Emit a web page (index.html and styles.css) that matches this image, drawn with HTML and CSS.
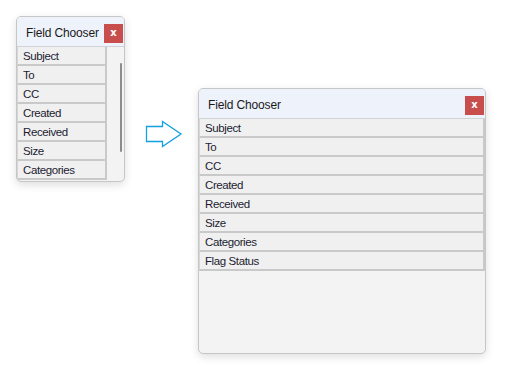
FILE: index.html
```html
<!DOCTYPE html>
<html>
<head>
<meta charset="utf-8">
<link rel="stylesheet" href="styles.css">
</head>
<body>
<div class="canvas">
  <div class="win win-small">
    <div class="titlebar">
      <span class="title">Field Chooser</span>
      <span class="close">x</span>
    </div>
    <div class="body">
      <div class="list">
        <div class="row">Subject</div>
        <div class="row">To</div>
        <div class="row">CC</div>
        <div class="row">Created</div>
        <div class="row">Received</div>
        <div class="row">Size</div>
        <div class="row">Categories</div>
      </div>
      <div class="scroll"><div class="thumb"></div></div>
    </div>
  </div>

  <svg class="arrow" width="38" height="28" viewBox="0 0 38 28">
    <path d="M1.5 6.5 H17.5 V1.5 L36 14 L17.5 26.5 V21.5 H1.5 Z" fill="#fff" stroke="#14a0e0" stroke-width="1.3" stroke-linejoin="miter"/>
  </svg>

  <div class="win win-big">
    <div class="titlebar">
      <span class="title">Field Chooser</span>
      <span class="close">x</span>
    </div>
    <div class="body">
      <div class="list">
        <div class="row">Subject</div>
        <div class="row">To</div>
        <div class="row">CC</div>
        <div class="row">Created</div>
        <div class="row">Received</div>
        <div class="row">Size</div>
        <div class="row">Categories</div>
        <div class="row">Flag Status</div>
      </div>
    </div>
  </div>
</div>
</body>
</html>
```

FILE: styles.css
```css
html, body {
  margin: 0;
  padding: 0;
  background: #ffffff;
}
.canvas {
  position: relative;
  width: 515px;
  height: 375px;
  overflow: hidden;
  font-family: "Liberation Sans", Arial, sans-serif;
}
.win {
  position: absolute;
  box-sizing: border-box;
  border: 1px solid #c6c6c6;
  border-radius: 5px;
  background: #f3f3f3;
  box-shadow: 0 3px 8px rgba(0, 0, 0, 0.13);
  overflow: hidden;
  display: flex;
  flex-direction: column;
}
.win-small {
  left: 16px;
  top: 16px;
  width: 109px;
  height: 166px;
}
.win-big {
  left: 198px;
  top: 88px;
  width: 288px;
  height: 266px;
}
.titlebar {
  height: 29px;
  flex: none;
  background: #eef2fa;
  border-bottom: 1px solid #cfd2d6;
  display: flex;
  align-items: flex-start;
  justify-content: space-between;
}
.title {
  font-size: 12px;
  color: #1a1a1a;
  padding-left: 9px;
  margin-top: 9px;
  letter-spacing: -0.15px;
}
.close {
  width: 19px;
  height: 19px;
  margin-top: 7px;
  background: #c84d4d;
  color: #ffffff;
  font-family: "DejaVu Sans", sans-serif;
  font-weight: bold;
  font-size: 10px;
  line-height: 17px;
  text-align: center;
}
.win-small .close { margin-right: 1px; }
.win-big .close { margin-right: 1px; }
.body {
  flex: 1;
  display: flex;
  min-height: 0;
}
.list {
  display: flex;
  flex-direction: column;
}
.win-small .list { width: 90px; }
.win-big .list { flex: 1; }
.row {
  box-sizing: border-box;
  height: 19px;
  flex: none;
  background: #f0f0f0;
  border-left: 1px solid #d6d6d6;
  border-right: 2px solid #c9c9c9;
  border-bottom: 2px solid #c9c9c9;
  font-size: 11.5px;
  letter-spacing: -0.4px;
  color: #1c1c30;
  padding-left: 5px;
  line-height: 19px;
}
.scroll {
  flex: 1;
  display: flex;
  justify-content: flex-end;
  padding-right: 2px;
}
.thumb {
  width: 2px;
  height: 89px;
  margin-top: 16px;
  background: #8c8c8c;
  border-radius: 1px;
}
.arrow {
  position: absolute;
  left: 145px;
  top: 120px;
}
```
